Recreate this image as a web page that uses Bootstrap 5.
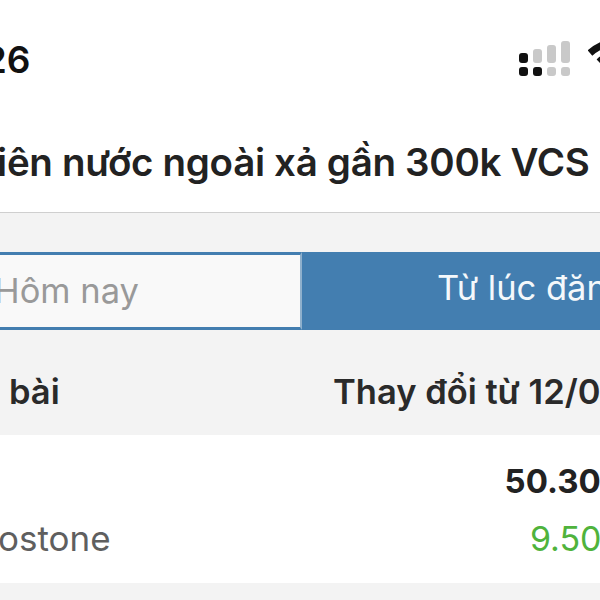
<!DOCTYPE html>
<html lang="vi">
  <head>
    <meta charset="UTF-8" />
    <meta name="viewport" content="width=device-width, initial-scale=1.0" />
    <title>Bài viết</title>
    <link href="https://cdn.jsdelivr.net/npm/bootstrap@5.3.0/dist/css/bootstrap.min.css" rel="stylesheet" />
    <style>
      html, body {
        height: 100%;
        overflow: hidden;
      }
      body {
        background-color: #f3f3f3;
        font-family: Inter, "Liberation Sans", sans-serif;
        color: #222;
        white-space: nowrap;
      }
      .top-area {
        height: 213px;
        background-color: #fff;
        border-bottom: 1px solid #cfcfcf;
      }
      .status-row {
        height: 139px;
        padding-top: 38px;
      }
      .clock {
        font-size: 37px;
        line-height: 44px;
        font-weight: 600;
        margin-left: -28px;
        color: #111;
      }
      .signal-icon {
        margin-top: 3px;
        margin-right: 18px;
      }
      .wifi-icon {
        margin-top: 1px;
        margin-right: -38px;
      }
      .post-title {
        font-size: 38.5px;
        line-height: 46px;
        font-weight: 600;
        letter-spacing: -0.3px;
        margin: 0 0 0 -28px;
        color: #222;
      }
      .tabs-area {
        padding-top: 39px;
      }
      .tab-btn {
        height: 78px;
        font-size: 34.5px;
        line-height: 72px;
        flex: 0 0 auto;
      }
      .tab-left {
        width: 302px;
        background-color: #f9f9f9;
        color: #999;
        border-top: 3px solid #437eb0;
        border-bottom: 3px solid #437eb0;
        border-right: 2px solid #8fb0cc;
      }
      .tab-left span {
        margin-left: -6px;
      }
      .tab-right {
        width: 340px;
        background-color: #437eb0;
        color: #f4f8fb;
        padding-left: 135px;
      }
      .head-row {
        height: 105px;
        padding-top: 18px;
        font-size: 34.5px;
        font-weight: 600;
        color: #2a2a2a;
      }
      .left-col {
        flex: 0 0 333px;
        padding-left: 9px;
      }
      .data-row {
        height: 148px;
        background-color: #fff;
      }
      .data-name {
        font-size: 35px;
        line-height: 52px;
        color: #5f5f5f;
        margin-left: -2px;
        padding-bottom: 19px;
      }
      .data-nums {
        margin-left: auto;
        margin-right: -23px;
        text-align: right;
      }
      .big-num {
        font-size: 33px;
        line-height: 40px;
        font-weight: 700;
        color: #222;
        padding-top: 26px;
      }
      .green-num {
        font-size: 34px;
        line-height: 40px;
        color: #4fb33c;
        padding-top: 18px;
      }
    </style>
  </head>
  <body>
    <div class="top-area">
      <div class="status-row d-flex align-items-start justify-content-between">
        <div class="clock">:26</div>
        <div class="d-flex">
          <svg class="signal-icon" width="51" height="36" viewBox="0 0 51 36">
            <rect x="0" y="12" width="9" height="10" rx="3" fill="#111" />
            <rect x="0" y="26" width="9" height="9" rx="3" fill="#111" />
            <rect x="14" y="26" width="9" height="9" rx="3" fill="#111" />
            <rect x="14" y="8" width="9" height="14" rx="3" fill="#c9c9c9" />
            <rect x="28" y="4" width="9" height="18" rx="3" fill="#c9c9c9" />
            <rect x="28" y="26" width="9" height="9" rx="3" fill="#c9c9c9" />
            <rect x="42" y="0" width="9" height="22" rx="3" fill="#c9c9c9" />
            <rect x="42" y="26" width="9" height="9" rx="3" fill="#c9c9c9" />
          </svg>
          <svg class="wifi-icon" width="50" height="36" viewBox="0 0 50 36">
            <path d="M2 14 Q25 -6 48 14" fill="none" stroke="#111" stroke-width="7" />
            <path d="M11 23 Q25 10 39 23" fill="none" stroke="#111" stroke-width="7" />
            <path d="M18 30 L25 22 L32 30 L25 36 Z" fill="#111" />
          </svg>
        </div>
      </div>
      <h1 class="post-title">Tiên nước ngoài xả gần 300k VCS</h1>
    </div>

    <div class="tabs-area d-flex">
      <div class="tab-btn tab-left"><span>Hôm nay</span></div>
      <div class="tab-btn tab-right">Từ lúc đăng bài</div>
    </div>

    <div class="head-row d-flex align-items-center">
      <div class="left-col">bài</div>
      <div>Thay đổi từ 12/06</div>
    </div>

    <div class="data-row d-flex">
      <div class="data-name align-self-end">ostone</div>
      <div class="data-nums">
        <div class="big-num">50.300</div>
        <div class="green-num">9.500</div>
      </div>
    </div>
    <script src="https://cdn.jsdelivr.net/npm/bootstrap@5.3.0/dist/js/bootstrap.bundle.min.js"></script>
  </body>
</html>
